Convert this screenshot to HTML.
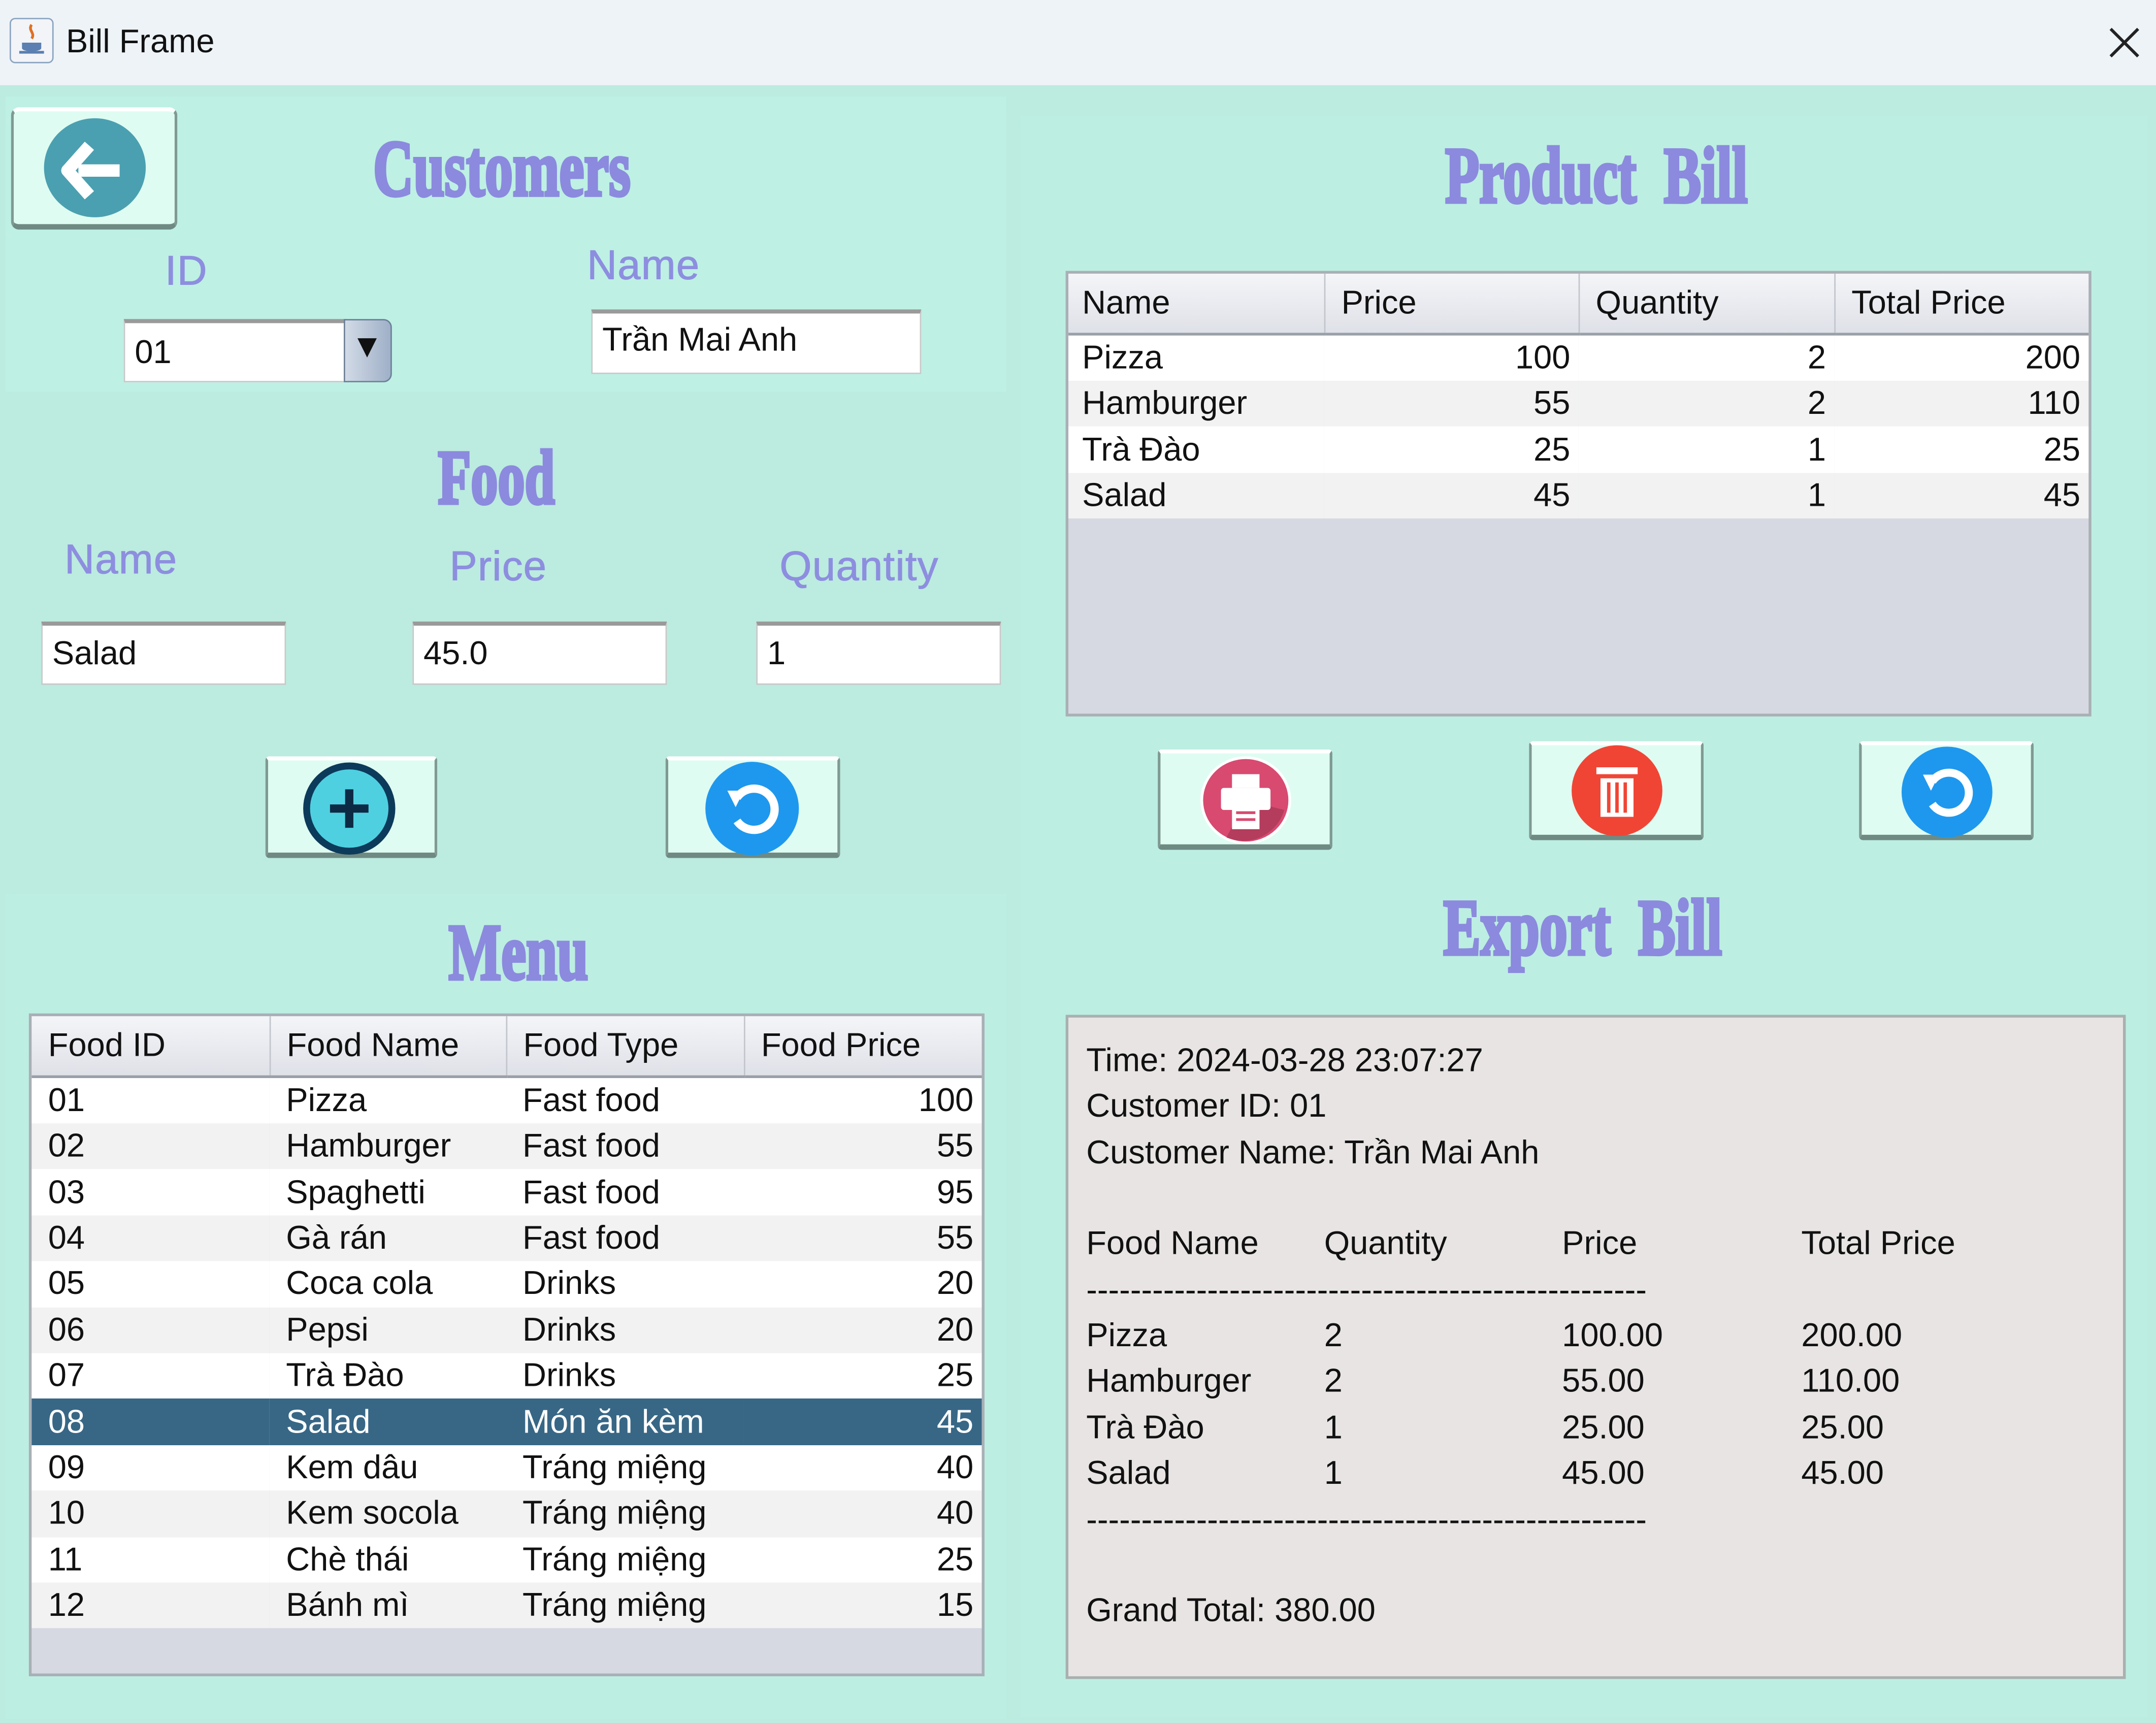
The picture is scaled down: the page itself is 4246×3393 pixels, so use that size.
<!DOCTYPE html>
<html><head><meta charset="utf-8">
<style>
*{margin:0;padding:0;box-sizing:border-box}
html,body{width:4246px;height:3393px;overflow:hidden;background:#bdece0}
#r{position:absolute;left:0;top:0;width:1568px;height:1253px;transform:scale(2.70791);transform-origin:0 0;background:#bcebdf;font-family:"Liberation Sans","Noto Sans CJK SC",sans-serif;color:#111}
.a{position:absolute}
.h{position:absolute;font-family:"Liberation Serif",serif;font-weight:bold;color:#8b8ade;-webkit-text-stroke:2.5px #8b8ade;white-space:nowrap;line-height:1;transform:translateX(-50%) scaleX(0.7);transform-origin:50% 0}
.lb{position:absolute;color:#8d8ee0;font-size:30px;line-height:1;white-space:nowrap;-webkit-text-stroke:0.4px #8d8ee0;letter-spacing:0.5px}
.tf{position:absolute;background:#fff;border:1px solid #c8c8c8;border-top:3px solid #9a9a9a;font-size:24px;line-height:40px;padding-left:7px;white-space:nowrap}
.btn{position:absolute;background:#dffcf2;border:2px solid #7f9a92;border-bottom:4px solid #6e8a82;border-top:3px solid #fff;border-radius:3px}
table{border-collapse:collapse;font-size:24px;table-layout:fixed}
td{padding:0 6px 0 12px;white-space:nowrap;height:33.4px;line-height:33px}
td.r{text-align:right}
.hd td{background:linear-gradient(#f4f5f8,#dfe1e8);height:44px;border-right:1px solid #c2c5cc;border-bottom:2px solid #9aa0a8}
.e td{background:#fff}.o td{background:#f2f2f2}
.sel td{background:#386786;color:#fff}
.ex{font-size:24px;line-height:33.5px;white-space:nowrap;position:absolute}
</style></head><body><div id="r">
<div class="a" style="left:0;top:0;width:1568px;height:62px;background:#eef3f8"></div>
<div class="a" style="left:7px;top:13px;width:32px;height:33px;border:1px solid #8aa4c0;border-radius:4px;background:#f2f4f8"></div>
<svg class="a" style="left:12px;top:16px" width="22" height="26" viewBox="0 0 22 26"><path d="M11 2 C8 6 14 8 11 12" stroke="#e07020" stroke-width="2" fill="none"/><path d="M4 15 h14 v4 c0 3 -14 3 -14 0z" fill="#5a7fb0"/><path d="M2 22 h18" stroke="#5a7fb0" stroke-width="2"/></svg>
<div class="a" style="left:48px;top:16px;font-size:24px;line-height:30px">Bill Frame</div>
<svg class="a" style="left:1533px;top:19px" width="24" height="24" viewBox="0 0 24 24"><path d="M2 2L22 22M22 2L2 22" stroke="#222" stroke-width="2.2"/></svg>
<div class="a" style="left:4px;top:70px;width:728px;height:215px;background:#bef0e4"></div>
<div class="a" style="left:742px;top:84px;width:820px;height:1165px;background:#bdeee2"></div>

<div class="btn" style="left:8px;top:78px;width:121px;height:89px;border-radius:6px"></div>
<svg class="a" style="left:31px;top:84px" width="76" height="76" viewBox="0 0 76 76"><ellipse cx="38" cy="38" rx="37" ry="36" fill="#4aa0b0"/><path d="M56 40 H26" stroke="#fff" stroke-width="9"/><path d="M34 22 L18 40 L34 58" stroke="#fff" stroke-width="9" fill="none" stroke-linejoin="round"/></svg>

<div class="h" style="left:365px;top:94px;font-size:58px">Customers</div>
<div class="lb" style="left:120px;top:183px">ID</div>
<div class="lb" style="left:427px;top:179px">Name</div>
<div class="tf" style="left:90px;top:232px;width:162px;height:46px;line-height:44px;font-size:24px">01</div>
<div class="a" style="left:250px;top:232px;width:35px;height:46px;background:linear-gradient(90deg,#d2dae6,#9fb0c8);border:1px solid #6d7f98;border-radius:0 6px 6px 0"></div>
<div class="a" style="left:260px;top:246px;width:0;height:0;border-left:7px solid transparent;border-right:7px solid transparent;border-top:14px solid #111"></div>
<div class="tf" style="left:430px;top:225px;width:240px;height:47px">Trần Mai Anh</div>

<div class="h" style="left:361px;top:320px;font-size:56px">Food</div>
<div class="lb" style="left:47px;top:393px">Name</div>
<div class="lb" style="left:327px;top:398px">Price</div>
<div class="lb" style="left:567px;top:398px">Quantity</div>
<div class="tf" style="left:30px;top:452px;width:178px;height:46px;line-height:42px">Salad</div>
<div class="tf" style="left:300px;top:452px;width:185px;height:46px;line-height:42px">45.0</div>
<div class="tf" style="left:550px;top:452px;width:178px;height:46px;line-height:42px">1</div>

<div class="btn" style="left:193px;top:550px;width:125px;height:74px"></div>
<svg class="a" style="left:219px;top:554px" width="70" height="68" viewBox="0 0 70 68"><ellipse cx="35" cy="34" rx="31" ry="31" fill="#4fd0e0" stroke="#0c3a5a" stroke-width="5"/><path d="M35 20V48M21 34H49" stroke="#0c2a44" stroke-width="6"/></svg>
<div class="btn" style="left:484px;top:550px;width:127px;height:74px"></div>
<svg class="a" style="left:512px;top:553px" width="70" height="70" viewBox="0 0 70 70"><circle cx="35" cy="35" r="34" fill="#1e98ee"/><path d="M24 27 A15 15 0 1 1 24 44" stroke="#fff" stroke-width="6" fill="none"/><path d="M17 22 L29 22 L23 34z" fill="#fff"/></svg>

<div class="a" style="left:4px;top:650px;width:728px;height:600px;background:#bdeee2"></div>
<div class="h" style="left:377px;top:664px;font-size:58px">Menu</div>
<div class="a" style="left:21px;top:737px;width:695px;height:482px;background:#d6d9e1;border:2px solid #a8b0b6;overflow:hidden">
<table style="width:691px">
<colgroup><col style="width:173px"><col style="width:172px"><col style="width:173px"><col style="width:173px"></colgroup>
<tr class="hd"><td>Food ID</td><td>Food Name</td><td>Food Type</td><td>Food Price</td></tr>
<tr class="e"><td>01</td><td>Pizza</td><td>Fast food</td><td class="r">100</td></tr>
<tr class="o"><td>02</td><td>Hamburger</td><td>Fast food</td><td class="r">55</td></tr>
<tr class="e"><td>03</td><td>Spaghetti</td><td>Fast food</td><td class="r">95</td></tr>
<tr class="o"><td>04</td><td>Gà rán</td><td>Fast food</td><td class="r">55</td></tr>
<tr class="e"><td>05</td><td>Coca cola</td><td>Drinks</td><td class="r">20</td></tr>
<tr class="o"><td>06</td><td>Pepsi</td><td>Drinks</td><td class="r">20</td></tr>
<tr class="e"><td>07</td><td>Trà Đào</td><td>Drinks</td><td class="r">25</td></tr>
<tr class="sel"><td>08</td><td>Salad</td><td>Món ăn kèm</td><td class="r">45</td></tr>
<tr class="e"><td>09</td><td>Kem dâu</td><td>Tráng miệng</td><td class="r">40</td></tr>
<tr class="o"><td>10</td><td>Kem socola</td><td>Tráng miệng</td><td class="r">40</td></tr>
<tr class="e"><td>11</td><td>Chè thái</td><td>Tráng miệng</td><td class="r">25</td></tr>
<tr class="o"><td>12</td><td>Bánh mì</td><td>Tráng miệng</td><td class="r">15</td></tr>
</table></div>

<div class="h" style="left:1161px;top:99px;font-size:58px;word-spacing:14px">Product Bill</div>
<div class="a" style="left:775px;top:197px;width:746px;height:324px;background:#d6d9e1;border:2px solid #a8b0b6;overflow:hidden">
<table style="width:742px">
<colgroup><col style="width:186px"><col style="width:185px"><col style="width:186px"><col style="width:185px"></colgroup>
<tr class="hd"><td style="padding-left:10px">Name</td><td>Price</td><td>Quantity</td><td>Total Price</td></tr>
<tr class="e"><td style="padding-left:10px">Pizza</td><td class="r">100</td><td class="r">2</td><td class="r">200</td></tr>
<tr class="o"><td style="padding-left:10px">Hamburger</td><td class="r">55</td><td class="r">2</td><td class="r">110</td></tr>
<tr class="e"><td style="padding-left:10px">Trà Đào</td><td class="r">25</td><td class="r">1</td><td class="r">25</td></tr>
<tr class="o"><td style="padding-left:10px">Salad</td><td class="r">45</td><td class="r">1</td><td class="r">45</td></tr>
</table></div>

<div class="btn" style="left:842px;top:545px;width:127px;height:73px"></div>
<svg class="a" style="left:872px;top:549px" width="68" height="66" viewBox="0 0 68 66"><ellipse cx="34" cy="33" rx="32" ry="31" fill="#d84a70" stroke="#fff" stroke-width="2"/><path d="M34 33 L62 40 A31 31 0 0 1 20 60z" fill="#b43c5c"/><rect x="24" y="14" width="20" height="10" fill="#fff"/><rect x="16" y="24" width="36" height="16" rx="2" fill="#fff"/><rect x="24" y="36" width="20" height="18" fill="#fff"/><path d="M27 42h14M27 47h14" stroke="#d84a70" stroke-width="2"/></svg>
<div class="btn" style="left:1112px;top:539px;width:127px;height:72px"></div>
<svg class="a" style="left:1141px;top:541px" width="70" height="68" viewBox="0 0 70 68"><ellipse cx="35" cy="34" rx="33" ry="33" fill="#f04535"/><rect x="20" y="17" width="30" height="5" fill="#fff"/><rect x="23" y="25" width="24" height="28" fill="#fff"/><path d="M29 28v22M35 28v22M41 28v22" stroke="#f04535" stroke-width="2.5"/></svg>
<div class="btn" style="left:1352px;top:539px;width:127px;height:72px"></div>
<svg class="a" style="left:1382px;top:542px" width="68" height="68" viewBox="0 0 70 70"><circle cx="35" cy="35" r="34" fill="#1e98ee"/><path d="M24 27 A15 15 0 1 1 24 44" stroke="#fff" stroke-width="6" fill="none"/><path d="M17 22 L29 22 L23 34z" fill="#fff"/></svg>

<div class="h" style="left:1151px;top:646px;font-size:58px;word-spacing:14px">Export Bill</div>
<div class="a" style="left:775px;top:738px;width:771px;height:483px;background:#e8e4e4;border:2px solid #a8b0b0"></div>
<div class="ex" style="left:790px;top:755px">Time: 2024-03-28 23:07:27</div>
<div class="ex" style="left:790px;top:788px">Customer ID: 01</div>
<div class="ex" style="left:790px;top:822px">Customer Name: Trần Mai Anh</div>
<div class="ex" style="left:790px;top:888px">Food Name</div><div class="ex" style="left:963px;top:888px">Quantity</div><div class="ex" style="left:1136px;top:888px">Price</div><div class="ex" style="left:1310px;top:888px">Total Price</div>
<div class="ex" style="left:790px;top:922px">---------------------------------------------------</div>
<div class="ex" style="left:790px;top:955px">Pizza</div><div class="ex" style="left:963px;top:955px">2</div><div class="ex" style="left:1136px;top:955px">100.00</div><div class="ex" style="left:1310px;top:955px">200.00</div>
<div class="ex" style="left:790px;top:988px">Hamburger</div><div class="ex" style="left:963px;top:988px">2</div><div class="ex" style="left:1136px;top:988px">55.00</div><div class="ex" style="left:1310px;top:988px">110.00</div>
<div class="ex" style="left:790px;top:1022px">Trà Đào</div><div class="ex" style="left:963px;top:1022px">1</div><div class="ex" style="left:1136px;top:1022px">25.00</div><div class="ex" style="left:1310px;top:1022px">25.00</div>
<div class="ex" style="left:790px;top:1055px">Salad</div><div class="ex" style="left:963px;top:1055px">1</div><div class="ex" style="left:1136px;top:1055px">45.00</div><div class="ex" style="left:1310px;top:1055px">45.00</div>
<div class="ex" style="left:790px;top:1089px">---------------------------------------------------</div>
<div class="ex" style="left:790px;top:1155px">Grand Total: 380.00</div>
</div></body></html>
